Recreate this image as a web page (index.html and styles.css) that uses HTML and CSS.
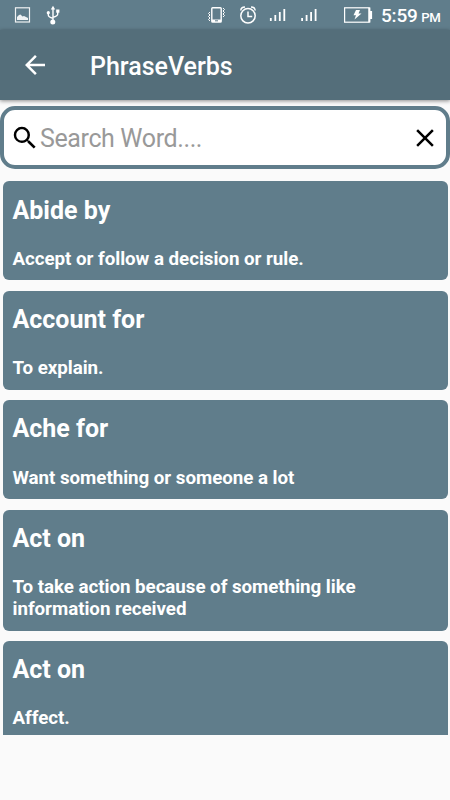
FILE: index.html
```html
<!DOCTYPE html>
<html lang="en">
<head>
<meta charset="utf-8">
<title>PhraseVerbs</title>
<link rel="stylesheet" href="styles.css">
</head>
<body>
<div class="status">
  <svg class="status-icons" width="375" height="30" viewBox="0 0 375 30" fill="none" stroke="#fff">
    <g opacity=".9">
      <rect x="15.500" y="7.800" width="14" height="14.200" stroke-width="1.200"/>
      <path d="M17 20v-3l2-2 1.500-.5 2 2 1.500-.5 2 1 2 1v2z" fill="#fff" stroke="none"/>
    </g>
    <path d="M53 8v14M48.300 13v2q0 2 4.700 3.300M57.700 11v3q0 2-4.700 3.300" stroke-width="1.400"/>
    <path d="M50.800 9.500 53 5.700l2.200 3.800z" fill="#fff" stroke="none"/>
    <circle cx="52.800" cy="22" r="2.500" fill="#fff" stroke="none"/>
    <circle cx="48.300" cy="12.700" r="1.600" fill="#fff" stroke="none"/>
    <rect x="56.200" y="9.500" width="3.200" height="3.200" fill="#fff" stroke="none"/>
    <rect x="211.800" y="7.800" width="9.400" height="14.200" rx=".8" stroke-width="1.400"/>
    <path d="M212 19.500h9v2.500h-9z" fill="#fff" stroke="none"/>
    <path d="M215 20.800h3" stroke="#607d8b" stroke-width="1"/>
    <path d="m210 12-1.500 1.500L210 15l-1.500 1.500L210 18l-1.500 1.500L210 21M223 8l1.500 1.500L223 11l1.500 1.500L223 14l1.500 1.500L223 17" stroke-width="1"/>
    <circle cx="248" cy="15.800" r="7.200" stroke-width="1.500"/>
    <path d="M248 11.500v5h4.200M240.800 10.500q.2-3.500 4.200-3.500M255.200 10.500q-.2-3.500-4.200-3.500" stroke-width="1.500"/>
    <g id="signal" stroke-width="1.800">
      <path d="M270.800 18V21M275.300 15V21M279.800 12V21M284.300 9v12"/>
    </g>
    <use href="#signal" x="31.300"/>
    <rect x="344.600" y="7.800" width="24.400" height="14.400" stroke-width="1.200"/>
    <path d="M369.500 7.500v15M371.200 11v8" stroke-width="1.800"/>
    <path d="M356 10h4l-1.500 3.500h3l-7 6 1.500-4.300h-2.500z" fill="#fff" stroke="none"/>
  </svg>
  <div class="clock">5:59 <span class="meridiem">PM</span></div>
</div>
<header class="toolbar">
  <svg class="back" width="30" height="30" viewBox="0 0 24 24"><path fill="#fff" d="M20 11H7.830l5.590-5.590L12 4l-8 8 8 8 1.410-1.410L7.830 13H20v-2z"/></svg>
  <h1 class="heading">PhraseVerbs</h1>
</header>
<div class="search">
  <svg class="search-icon" width="30" height="30" viewBox="0 0 24 24"><path d="M15.500 14h-.79l-.28-.27A6.471 6.471 0 0 0 16 9.500 6.500 6.500 0 1 0 9.500 16c1.610 0 3.090-.59 4.230-1.570l.27.28v.79l5 4.990L20.490 19l-4.990-5zm-6 0C7.010 14 5 11.990 5 9.500S7.010 5 9.500 5 14 7.010 14 9.500 11.990 14 9.500 14z"/></svg>
  <span class="hint">Search Word....</span>
  <svg class="clear" width="30" height="30" viewBox="0 0 24 24"><path d="M19 6.410 17.590 5 12 10.590 6.410 5 5 6.410 10.590 12 5 17.590 6.410 19 12 13.410 17.590 19 19 17.590 13.410 12z"/></svg>
</div>
<main class="list">
  <article class="card"><h2 class="verb">Abide by</h2><p class="meaning">Accept or follow a decision or rule.</p></article>
  <article class="card"><h2 class="verb">Account for</h2><p class="meaning">To explain.</p></article>
  <article class="card"><h2 class="verb">Ache for</h2><p class="meaning">Want something or someone a lot</p></article>
  <article class="card"><h2 class="verb">Act on</h2><p class="meaning">To take action because of something like information received</p></article>
  <article class="card"><h2 class="verb">Act on</h2><p class="meaning">Affect.</p></article>
</main>
</body>
</html>
```

FILE: styles.css
```css
* { box-sizing: border-box; }
body {
  margin: 0;
  height: 800px;
  overflow: hidden;
  background: #fafafa;
  font-family: Roboto, sans-serif;
}
h1, h2, p { margin: 0; }
svg { display: block; flex: none; }
.status {
  display: flex;
  height: 30px;
  background: #607d8b;
  color: #fff;
}
.clock {
  padding-left: 6px;
  font-size: 19px;
  font-weight: 500;
  line-height: 31px;
  letter-spacing: -.2px;
  white-space: nowrap;
}
.meridiem { font-size: 13.2px; margin-left: -1px; }
.toolbar {
  display: flex;
  align-items: center;
  height: 70px;
  padding-left: 20px;
  background: #546e7a;
  color: #fff;
  box-shadow: 0 1px 4px rgba(0, 0, 0, .45);
}
.heading {
  margin: 3px 0 0 40px;
  font-size: 25px;
  font-weight: 500;
  line-height: 30px;
}
.search {
  display: flex;
  align-items: center;
  height: 62.5px;
  margin-top: 6.3px;
  padding: 0 6px 0 5.5px;
  border: 4px solid #607d8b;
  border-radius: 15px;
  background: #fff;
}
.search-icon { margin-right: .5px; }
.hint {
  flex: 1;
  padding-top: 2px;
  font-size: 25px;
  line-height: 30px;
  letter-spacing: -.38px;
  color: #999;
}
.list {
  height: 553.6px;
  margin-top: 12.6px;
  padding: 0 2.5px;
  overflow: hidden;
}
.card {
  margin-bottom: 10.4px;
  padding: 14.2px 10px 10.5px;
  border-radius: 6px;
  background: #607d8b;
  color: #fff;
}
.verb {
  font-size: 25px;
  font-weight: 700;
  line-height: 30px;
}
.meaning {
  margin-top: 22.3px;
  font-size: 18.75px;
  font-weight: 700;
  line-height: 22px;
  letter-spacing: -.04px;
}
```
